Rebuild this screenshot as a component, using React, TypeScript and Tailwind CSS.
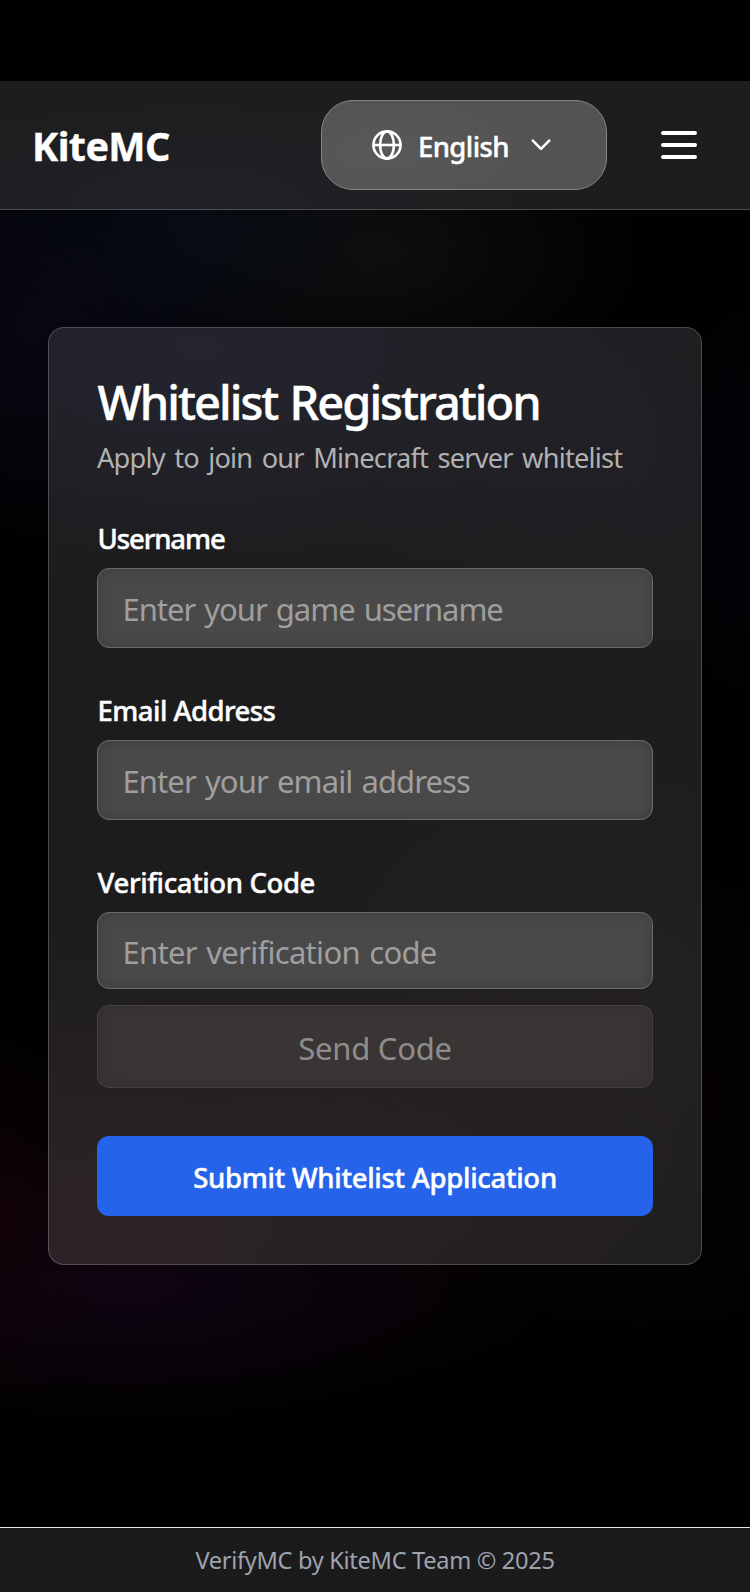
import { useState } from "react";

const medium = "font-medium [-webkit-text-stroke:0.45px_currentColor]";

const label = `${medium} block h-7 whitespace-nowrap pt-px pl-[0.5px] text-[27.5px] leading-7 text-white`;
const field =
  "block w-full rounded-xl border border-[#6c6a6b] bg-[#4a4949] px-[24.5px] text-[31px] text-white shadow-[inset_0_0_14px_rgba(0,0,0,0.17)] outline-none [word-spacing:2px] placeholder:text-[#9f9f9f] placeholder:opacity-100";

function GlobeIcon() {
  return (
    <svg className="size-8" viewBox="0 0 32 32" fill="none" stroke="currentColor" strokeWidth="2.6">
      <circle cx="16" cy="16" r="13.6" />
      <path d="M2.4 16h27.2" />
      <ellipse cx="16" cy="16" rx="6.9" ry="13.6" />
    </svg>
  );
}

function ChevronIcon() {
  return (
    <svg className="h-3 w-5" viewBox="0 0 20 12" fill="none" stroke="currentColor" strokeWidth="2.6" strokeLinecap="round" strokeLinejoin="round">
      <path d="M1.8 1.6l8.2 8.2 8.2-8.2" />
    </svg>
  );
}

function Header() {
  return (
    <header className="flex h-[129px] items-center border-b border-[#4d4d4d] bg-[#1d1d1d] bg-[radial-gradient(ellipse_380px_110px_at_190px_120px,rgba(36,40,56,0.4),transparent)] pl-8 pr-[53px]">
      <h1 className="mt-px whitespace-nowrap text-[39.5px] font-bold leading-[56px] tracking-[-0.6px] text-white [-webkit-text-stroke:0.4px_currentColor]">KiteMC</h1>
      <button className="ml-auto flex h-[90px] w-[286px] items-center rounded-[32px] border border-[#858585] bg-[#535353] bg-[radial-gradient(ellipse_160px_70px_at_60px_50px,rgba(92,94,94,0.45),transparent)] pl-[49px] text-white">
        <GlobeIcon />
        <span className={`${medium} ml-[15px] w-[91px] pt-[3px] text-left text-[27.5px] leading-9 tracking-[-0.6px]`}>English</span>
        <span className="mb-px ml-[21.5px]">
          <ChevronIcon />
        </span>
      </button>
      <button aria-label="Menu" className="ml-[54px] flex w-9 flex-col gap-2">
        <span className="h-1 rounded-full bg-white" />
        <span className="h-1 rounded-full bg-white" />
        <span className="h-1 rounded-full bg-white" />
      </button>
    </header>
  );
}

function RegistrationCard() {
  const [username, setUsername] = useState("");
  const [email, setEmail] = useState("");
  const [code, setCode] = useState("");
  return (
    <form
      onSubmit={(e) => e.preventDefault()}
      className="mx-12 mt-[117px] h-[938px] rounded-2xl border border-white/20 bg-[#1c1c1c] bg-[radial-gradient(ellipse_560px_260px_at_150px_20px,rgba(46,46,72,0.45),transparent),radial-gradient(ellipse_300px_260px_at_600px_160px,rgba(44,38,52,0.28),transparent),radial-gradient(ellipse_620px_330px_at_60px_910px,rgba(64,44,56,0.48),transparent),radial-gradient(ellipse_420px_380px_at_560px_700px,rgba(50,40,42,0.35),transparent)] bg-origin-border px-12 pt-12"
    >
      <h2 className={`${medium} h-[52px] whitespace-nowrap pl-[0.5px] text-[47px] leading-[52px] tracking-[-1.98px] text-white [word-spacing:2px]`}>Whitelist Registration</h2>
      <p className="mt-2 h-10 whitespace-nowrap pt-[2px] text-[27.2px] leading-10 tracking-[-0.77px] text-[#b1b1b2] [word-spacing:3px]">Apply to join our Minecraft server whitelist</p>

      <label htmlFor="username" className={`${label} mt-12 tracking-[-1.1px]`}>Username</label>
      <input id="username" value={username} onChange={(e) => setUsername(e.target.value)} placeholder="Enter your game username" className={`${field} mt-4 h-20 pt-[2px] tracking-[-1.02px]`} />

      <label htmlFor="email" className={`${label} mt-12 tracking-[-0.53px]`}>Email Address</label>
      <input id="email" value={email} onChange={(e) => setEmail(e.target.value)} placeholder="Enter your email address" className={`${field} mt-4 h-20 pt-[2px] tracking-[-0.91px]`} />

      <label htmlFor="code" className={`${label} mt-12 tracking-[-0.38px]`}>Verification Code</label>
      <input id="code" value={code} onChange={(e) => setCode(e.target.value)} placeholder="Enter verification code" className={`${field} mt-4 h-[77px] pt-[3px] tracking-[-0.7px]`} />

      <button type="button" disabled className="mt-4 block h-[83px] w-full rounded-xl border border-[#444141] bg-[#383534] pt-[4px] text-[31px] tracking-[-0.25px] text-[#8f8d8c] shadow-[inset_0_0_14px_rgba(0,0,0,0.13)]">
        Send Code
      </button>
      <button type="submit" className={`${medium} mt-12 block h-20 w-full rounded-xl bg-[#2563eb] pt-[7px] pb-1 text-[27.5px] tracking-[-0.28px] text-white`}>
        Submit Whitelist Application
      </button>
    </form>
  );
}

export default function App() {
  return (
    <div className="flex h-[1592px] w-[750px] flex-col overflow-hidden bg-black bg-[radial-gradient(ellipse_260px_240px_at_30px_330px,rgba(11,11,28,0.7),transparent),radial-gradient(ellipse_260px_160px_at_210px_220px,rgba(8,16,26,0.7),transparent),radial-gradient(ellipse_280px_170px_at_380px_250px,rgba(22,18,16,0.75),transparent),radial-gradient(ellipse_100px_280px_at_740px_500px,rgba(6,4,14,0.6),transparent),radial-gradient(ellipse_120px_200px_at_0px_1210px,rgba(24,3,8,0.6),transparent),radial-gradient(ellipse_420px_150px_at_130px_1285px,rgba(22,7,26,0.7),transparent),radial-gradient(ellipse_500px_340px_at_640px_1100px,rgba(8,4,3,0.8),transparent)] pt-[81px] font-['Noto_Sans',sans-serif] antialiased">
      <Header />
      <main className="flex-1">
        <RegistrationCard />
      </main>
      <footer className="flex h-[65px] items-center justify-center border-t border-gray-200 bg-[#1b1b1b] pt-px text-[23.6px] tracking-[-0.31px] text-[#9ca3af]">
        VerifyMC by KiteMC Team © 2025
      </footer>
    </div>
  );
}
